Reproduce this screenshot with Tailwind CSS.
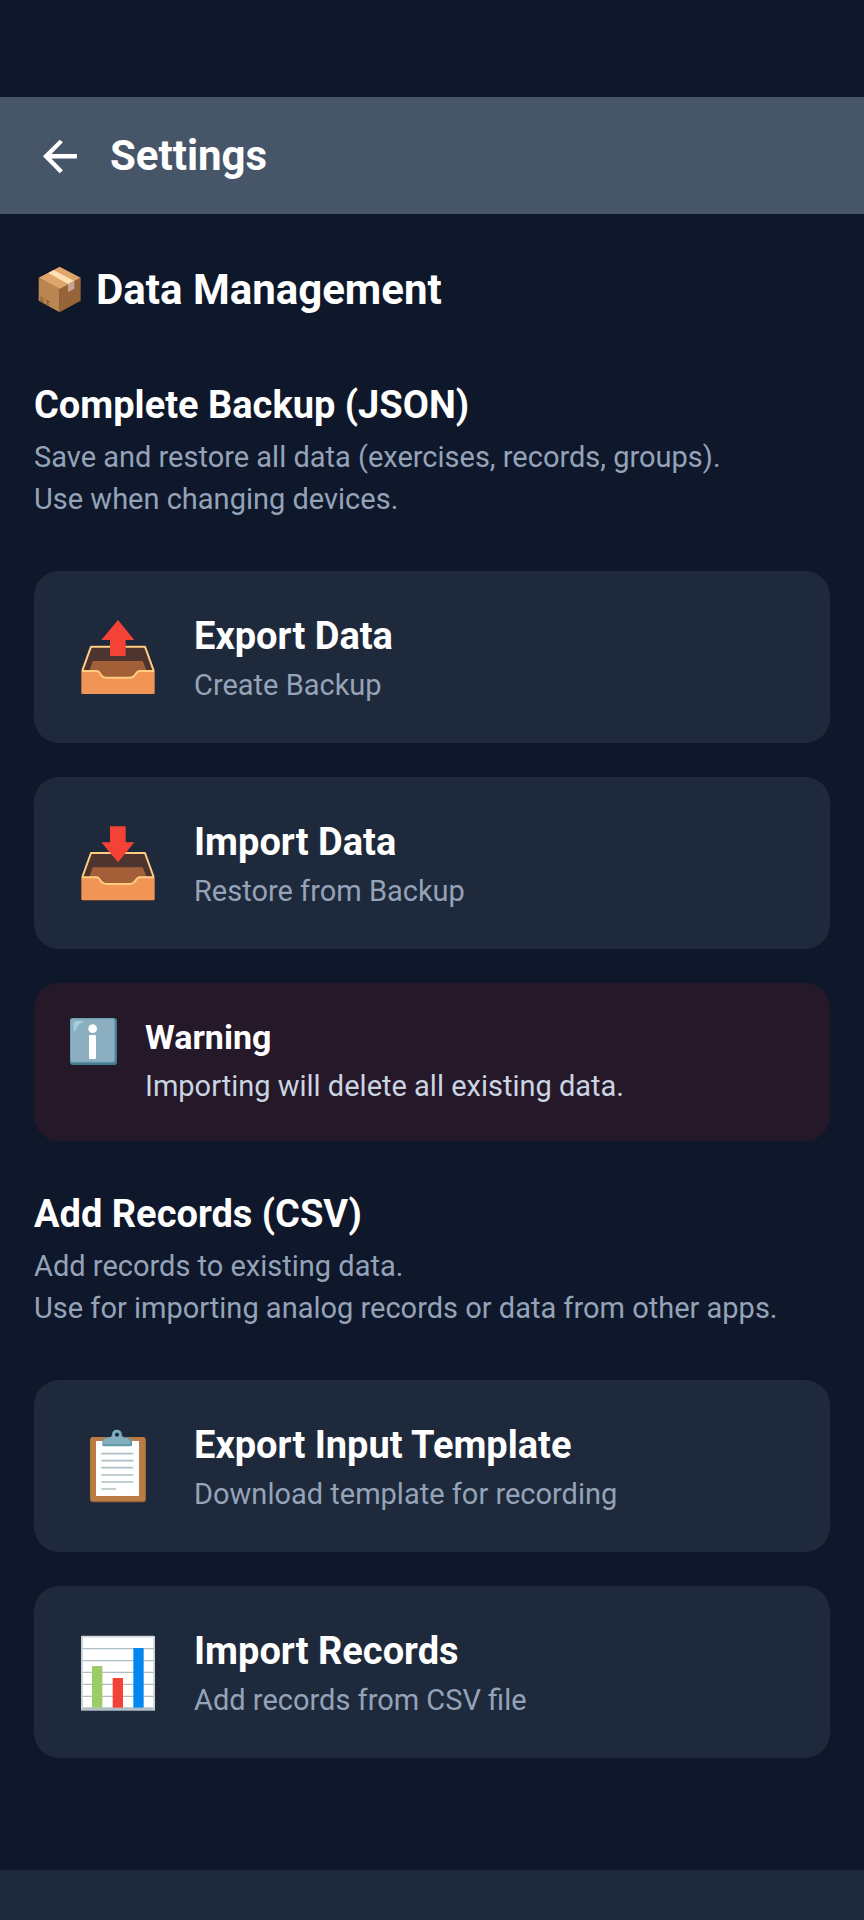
<!DOCTYPE html>
<html lang="en">
<head>
    <meta charset="UTF-8">
    <meta name="viewport" content="width=device-width, initial-scale=1.0">
    <title>Settings</title>
    <script src="https://cdn.jsdelivr.net/npm/@tailwindcss/browser@4"></script>
</head>
<body class="bg-[#0f172a] text-white font-[Roboto,sans-serif] flex flex-col min-h-screen">

    <!-- top bar -->
    <header class="mt-[97px] bg-[#475569] h-[117px] px-[34px] flex items-center gap-[25px]">
        <button type="button" aria-label="Back" class="w-[51px] h-[51px] shrink-0">
            <svg class="w-full h-full" viewBox="0 0 24 24" fill="#fff">
                <path d="M20.200 11.300H8.200l5.400-5.500L12.100 4.600 4.200 12.400l7.900 7.900 1.500-1.400-5.400-5.500h12z"/>
            </svg>
        </button>
        <h1 class="text-[42px] leading-[50px] font-bold">Settings</h1>
    </header>

    <main class="px-[34px] pt-[51px] pb-[51px]">
        <h2 class="flex items-center gap-[10px] text-[42px] leading-[50px] font-bold">
            <svg class="w-[52px] h-[50px] shrink-0" viewBox="27 30 156 150">
                <path fill="#b98550" d="M41 68l63 33v71l-63-35z"/>
                <path fill="#976339" d="M167 68l-63 33v71l63-35z"/>
                <path fill="#dfa56b" d="M104 35l63 33-63 34-63-34z"/>
                <path fill="#ffe0b2" d="M86 45L70 54l59 33 18-9z"/>
                <path fill="#c7a58e" d="M129 88l19-10v23l-19 10z"/>
                <path stroke="#7b5733" stroke-width="2.5" fill="none" d="M48 125v12M54 128v12M46 137l11 6M62 135l13 6M68 138v11M64 146l8 4M65 135l6 8"/>
            </svg>
            Data Management
        </h2>

        <section class="mt-[68px]">
            <h3 class="text-[38px] leading-[44px] font-bold">Complete Backup (JSON)</h3>
            <p class="mt-[9px] text-[29px] leading-[42px] text-[#94a3b8]">Save and restore all data (exercises, records, groups).<br>Use when changing devices.</p>

            <div class="mt-[51px] flex flex-col gap-[34px]">
                <button type="button" class="bg-[#1e293b] rounded-[25px] px-[42px] py-10 flex items-center gap-[34px] text-left">
                    <svg class="w-[84px] h-[84px] shrink-0" viewBox="18 15 252 252">
                        <path fill="#4e342e" d="M63 109h162l25 74v10H36v-10z"/>
                        <path fill="#a35f37" d="M68 153h150l13 32-30 20H85l-27-22z"/>
                        <path fill="none" stroke="#ffcc80" stroke-width="6" stroke-linejoin="round" d="M37 182l26-72h162l26 72"/>
                        <path fill="#f19556" d="M34 181h47c8 0 9 8 14 15 4 5 8 7 13 7h72c6 0 10-2 13-7 5-7 7-15 15-15h46v67q0 4-4 4H38q-4 0-4-4z"/>
                        <path fill="none" stroke="#ffcc80" stroke-width="6" d="M36 183h44c8 0 9 7 14 13 4 5 8 7 14 7h72c6 0 10-2 14-7 5-6 7-13 15-13h43"/>
                        <path fill="#f44336" d="M144 30l49 60h-26v48h-47V90H94z"/>
                    </svg>
                    <span class="flex flex-col gap-[6px]">
                        <span class="text-[38px] leading-[50px] font-bold">Export Data</span>
                        <span class="text-[29px] leading-[36px] text-[#94a3b8]">Create Backup</span>
                    </span>
                </button>

                <button type="button" class="bg-[#1e293b] rounded-[25px] px-[42px] py-10 flex items-center gap-[34px] text-left">
                    <svg class="w-[84px] h-[84px] shrink-0" viewBox="18 14 252 252">
                        <path fill="#4e342e" d="M63 109h162l25 74v10H36v-10z"/>
                        <path fill="#a35f37" d="M68 153h150l13 32-30 20H85l-27-22z"/>
                        <path fill="none" stroke="#ffcc80" stroke-width="6" stroke-linejoin="round" d="M37 182l26-72h162l26 72"/>
                        <path fill="#f19556" d="M34 181h47c8 0 9 8 14 15 4 5 8 7 13 7h72c6 0 10-2 13-7 5-7 7-15 15-15h46v67q0 4-4 4H38q-4 0-4-4z"/>
                        <path fill="none" stroke="#ffcc80" stroke-width="6" d="M36 183h44c8 0 9 7 14 13 4 5 8 7 14 7h72c6 0 10-2 14-7 5-6 7-13 15-13h43"/>
                        <path fill="#f44336" d="M120 30h47v48h26l-49 60-50-60h26z"/>
                    </svg>
                    <span class="flex flex-col gap-[6px]">
                        <span class="text-[38px] leading-[50px] font-bold">Import Data</span>
                        <span class="text-[29px] leading-[36px] text-[#94a3b8]">Restore from Backup</span>
                    </span>
                </button>

                <div class="bg-[#251829] rounded-[25px] p-[34px] flex items-start gap-[25px]">
                    <svg class="w-[52px] h-[50px] shrink-0" viewBox="24 36 156 150">
                        <rect x="30" y="39" width="141" height="141" rx="8" fill="#447c8d"/>
                        <rect x="30" y="39" width="136" height="135" rx="8" fill="#5f98a9"/>
                        <rect x="32" y="41" width="131" height="129" rx="6" fill="#8bafc0"/>
                        <path fill="#a5cfdc" d="M41 79V57q0-9 10-9h18q5 1 0 4Q54 56 46 77q-3 6-5 2z"/>
                        <circle cx="98" cy="71" r="13" fill="#fff"/>
                        <rect x="87" y="90" width="21" height="72" rx="3" fill="#fff"/>
                    </svg>
                    <div>
                        <p class="text-[34px] leading-[40px] font-bold">Warning</p>
                        <p class="mt-2 text-[29px] leading-[42px] text-[#cbd5e1]">Importing will delete all existing data.</p>
                    </div>
                </div>
            </div>
        </section>

        <section class="mt-[51px]">
            <h3 class="text-[38px] leading-[44px] font-bold">Add Records (CSV)</h3>
            <p class="mt-[9px] text-[29px] leading-[42px] text-[#94a3b8]">Add records to existing data.<br>Use for importing analog records or data from other apps.</p>

            <div class="mt-[51px] flex flex-col gap-[34px]">
                <button type="button" class="bg-[#1e293b] rounded-[25px] px-[42px] py-10 flex items-center gap-[34px] text-left">
                    <svg class="w-[84px] h-[84px] shrink-0" viewBox="3 12 252 252">
                        <rect x="45" y="51" width="168" height="196" rx="10" fill="#a06235"/>
                        <rect x="46" y="51" width="164" height="192" rx="9" fill="#ba7b44"/>
                        <path fill="#fff" d="M63 63h129v165H63z"/>
                        <path stroke="#b0bec5" stroke-width="5" stroke-linecap="round" d="M81 101h92M81 122h92M81 143h92M81 165h92M81 186h92M81 207h41"/>
                        <path fill="#5f99a9" fill-rule="evenodd" d="M126 29c9 0 15 6 15 14 0 6 3 8 12 9 11 1 18 6 18 16v7q0 4-5 4H87q-5 0-5-4v-7c0-10 7-15 18-16 8-1 11-3 11-9 0-8 6-14 15-14zm0 9a6 6 0 1 0 0 12 6 6 0 1 0 0-12z"/>
                        <path fill="#82aebd" fill-rule="evenodd" d="M125 30c7 0 12 5 12 12 0 8 4 12 14 13 10 1 15 5 15 12v4q0 2-3 2H84v-5c0-9 7-14 17-15 8-1 12-4 12-10 0-8 5-13 12-13zm1 7a7 7 0 1 0 0 14 7 7 0 1 0 0-14z"/>
                    </svg>
                    <span class="flex flex-col gap-[6px]">
                        <span class="text-[38px] leading-[50px] font-bold">Export Input Template</span>
                        <span class="text-[29px] leading-[36px] text-[#94a3b8]">Download template for recording</span>
                    </span>
                </button>

                <button type="button" class="bg-[#1e293b] rounded-[25px] px-[42px] py-10 flex items-center gap-[34px] text-left">
                    <svg class="w-[84px] h-[84px] shrink-0" viewBox="18 30 252 252">
                        <path fill="#b0bec5" d="M33 48h222v224H33z"/>
                        <path fill="#fff" d="M39 51h213v211H39z"/>
                        <path stroke="#cfd8dc" stroke-width="5" d="M36 48v219M252 48v219M36 50h216"/>
                        <path stroke="#b0bec5" stroke-width="4" d="M39 86h213M39 122h213M39 157h213M39 193h213M39 229h213"/>
                        <path fill="#9ccc65" d="M66 138h31v125H66z"/>
                        <path fill="#f44336" d="M128 174h31v89h-31z"/>
                        <path fill="#0288f0" d="M190 84h31v179h-31z"/>
                    </svg>
                    <span class="flex flex-col gap-[6px]">
                        <span class="text-[38px] leading-[50px] font-bold">Import Records</span>
                        <span class="text-[29px] leading-[36px] text-[#94a3b8]">Add records from CSV file</span>
                    </span>
                </button>
            </div>
        </section>
    </main>

    <!-- system navigation strip -->
    <footer class="mt-auto h-[50px] bg-[#1e293b]"></footer>

</body>
</html>
